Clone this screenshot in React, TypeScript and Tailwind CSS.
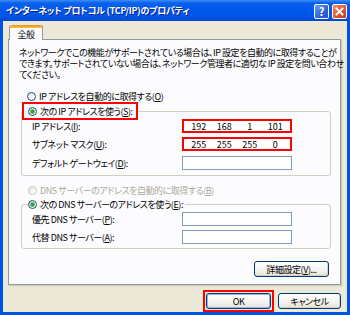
import React from "react";

const F = { fontFamily: '"Noto Sans CJK JP", "Noto Sans", sans-serif', fontFeatureSettings: '"palt"' } as React.CSSProperties;

function Radio({ checked = false, disabled = false }: { checked?: boolean; disabled?: boolean }) {
  return (
    <span
      className={
        "flex h-[9px] w-[9px] shrink-0 items-center justify-center rounded-full border bg-[linear-gradient(135deg,#dcdcd5_0%,#ffffff_70%)] " +
        (disabled ? "border-[#cac8bb]" : "border-[#1c5180]")
      }
    >
      {checked && <span className="h-[3px] w-[3px] rounded-full bg-[#21a121] shadow-[0_0_0_1px_#5fc25f]" />}
    </span>
  );
}

function U({ c }: { c: string }) {
  return <span className="underline underline-offset-1">{c}</span>;
}

function IpField({ vals, red }: { vals?: string[]; red?: boolean }) {
  return (
    <div
      className={
        "flex h-[14px] w-[110px] items-center bg-white px-[2px] " +
        (red ? "border-2 border-[#ff0000]" : "border border-[#7f9db9]")
      }
    >
      {vals &&
        vals.map((v, i) => (
          <span key={i} className="flex-1 text-center text-[9px] leading-none tracking-normal text-black">
            {v}
          </span>
        ))}
    </div>
  );
}

function Row({ label, children }: { label: React.ReactNode; children: React.ReactNode }) {
  return (
    <div className="flex items-center">
      <span className="w-[160px] whitespace-nowrap pl-[10px] text-[9px] leading-none">{label}</span>
      {children}
    </div>
  );
}

function XpButton({ children, className = "" }: { children: React.ReactNode; className?: string }) {
  return (
    <div
      className={
        "flex items-center justify-center whitespace-nowrap rounded-[3px] border border-[#003c74] bg-[linear-gradient(180deg,#ffffff_0%,#f4f3ee_60%,#e3e0d6_100%)] text-[9px] leading-none text-black shadow-[inset_-1px_-1px_0_#d6d0c5] " +
        className
      }
    >
      {children}
    </div>
  );
}

export default function App() {
  return (
    <div className="flex h-[315px] w-[350px] flex-col bg-[#0054e3] tracking-[-0.45px]" style={F}>
      {/* title bar */}
      <div className="flex h-[21px] shrink-0 items-center bg-[linear-gradient(180deg,#3d8ef8_0%,#0a62ec_14%,#0058ee_45%,#0055e6_80%,#0047cf_100%)] pl-[6px] pr-[3px]">
        <span className="flex-1 whitespace-nowrap text-[9px] font-bold leading-none tracking-[-0.25px] text-white [text-shadow:1px_1px_0_#0a1e8c]">
          インターネット プロトコル (TCP/IP)のプロパティ
        </span>
        <div className="flex items-center gap-[3px] pt-px">
          <div className="flex h-[15px] w-[15px] items-center justify-center rounded-[2px] border border-white bg-[linear-gradient(135deg,#6f9cf5_0%,#2f63dc_60%,#1f4fc9_100%)] text-[11px] font-bold leading-none tracking-normal text-white">
            ?
          </div>
          <div className="flex h-[15px] w-[15px] items-center justify-center rounded-[2px] border border-white bg-[linear-gradient(135deg,#f0906c_0%,#dc5330_60%,#c13b1c_100%)]">
            <svg width="9" height="9" viewBox="0 0 9 9">
              <path d="M1.5 1.5 L7.5 7.5 M7.5 1.5 L1.5 7.5" stroke="#fff" strokeWidth="1.8" strokeLinecap="square" />
            </svg>
          </div>
        </div>
      </div>

      {/* body */}
      <div className="mx-[3px] mb-[3px] flex flex-1 flex-col bg-[#ece9d8] pl-[5px] pr-[6px] pt-[4px]">
        {/* tabs */}
        <div className="relative z-10 -mb-px flex pl-px">
          <div className="flex h-[15px] w-[34px] flex-col rounded-t-[2px] border-x border-[#919b9c] bg-[#fcfcfe]">
            <div className="h-[3px] rounded-t-[2px] bg-[linear-gradient(180deg,#e68b2c_0%,#ffc73c_100%)]" />
            <div className="flex flex-1 items-center justify-center text-[9px] leading-none text-black">全般</div>
          </div>
        </div>

        {/* panel */}
        <div className="flex h-[246px] w-[333px] flex-col border border-[#919b9c] bg-[#fcfcfe] text-black shadow-[1px_1px_0_#d0cdbf,2px_2px_0_#e3e0d0]">
          <div className="flex flex-col whitespace-nowrap pl-[10px] pt-[8px] text-[9px] leading-[9px]">
            <div className="h-[11px]">ネットワークでこの機能がサポートされている場合は、IP 設定を自動的に取得することが</div>
            <div className="h-[11px]">できます。サポートされていない場合は、ネットワーク管理者に適切な IP 設定を問い合わせ</div>
            <div className="h-[11px]">てください。</div>
          </div>

          <div className="ml-[18px] mt-[9px] flex h-[12px] items-center gap-[3px]">
            <Radio />
            <span className="whitespace-nowrap text-[9px] leading-none">
              IP アドレスを自動的に取得する(<U c="O" />)
            </span>
          </div>

          <fieldset className="ml-[12px] w-[310px] rounded-[3px] border border-[#d0d0bf] pb-[5px]">
            <legend className="flex h-[18px] w-[116px] items-center gap-[3px] border-2 border-[#ff0000] bg-[#fcfcfe] pl-[4px]">
              <Radio checked />
              <span className="whitespace-nowrap text-[9px] leading-none">
                次の IP アドレスを使う(<U c="S" />):
              </span>
            </legend>
            <div className="-mt-px flex flex-col gap-[4px]">
              <Row label={<>IP アドレス(<U c="I" />):</>}>
                <IpField red vals={["192", "168", "1", "101"]} />
              </Row>
              <Row label={<>サブネット マスク(<U c="U" />):</>}>
                <IpField red vals={["255", "255", "255", "0"]} />
              </Row>
              <div className="pt-px">
                <Row label={<>デフォルト ゲートウェイ(<U c="D" />):</>}>
                  <IpField />
                </Row>
              </div>
            </div>
          </fieldset>

          <div className="ml-[19px] mt-[8px] flex h-[12px] items-center gap-[3px]">
            <Radio disabled />
            <span className="whitespace-nowrap text-[9px] leading-none text-[#aca899]">
              DNS サーバーのアドレスを自動的に取得する(<U c="B" />)
            </span>
          </div>

          <fieldset className="ml-[12px] mt-px w-[310px] rounded-[3px] border border-[#d0d0bf] pb-[4px]">
            <legend className="ml-[6px] flex h-[14px] items-center gap-[3px] bg-[#fcfcfe] pr-[2px]">
              <Radio checked />
              <span className="whitespace-nowrap text-[9px] leading-none">
                次の DNS サーバーのアドレスを使う(<U c="E" />):
              </span>
            </legend>
            <div className="mt-[1px] flex flex-col gap-[4px]">
              <Row label={<>優先 DNS サーバー(<U c="P" />):</>}>
                <IpField />
              </Row>
              <Row label={<>代替 DNS サーバー(<U c="A" />):</>}>
                <IpField />
              </Row>
            </div>
          </fieldset>

          <div className="ml-[12px] mt-[12px] flex w-[308px] justify-end">
            <XpButton className="h-[16px] w-[75px]">
              詳細設定(<U c="V" />)...
            </XpButton>
          </div>
        </div>

        {/* bottom buttons */}
        <div className="mt-[5px] flex items-center justify-end gap-[4px]">
          <div className="border-2 border-[#ff0000] p-[1px]">
            <XpButton className="h-[16px] w-[65px] shadow-[inset_0_0_0_1px_#9bb7ea]">OK</XpButton>
          </div>
          <XpButton className="h-[16px] w-[63px]">キャンセル</XpButton>
        </div>
      </div>
    </div>
  );
}
